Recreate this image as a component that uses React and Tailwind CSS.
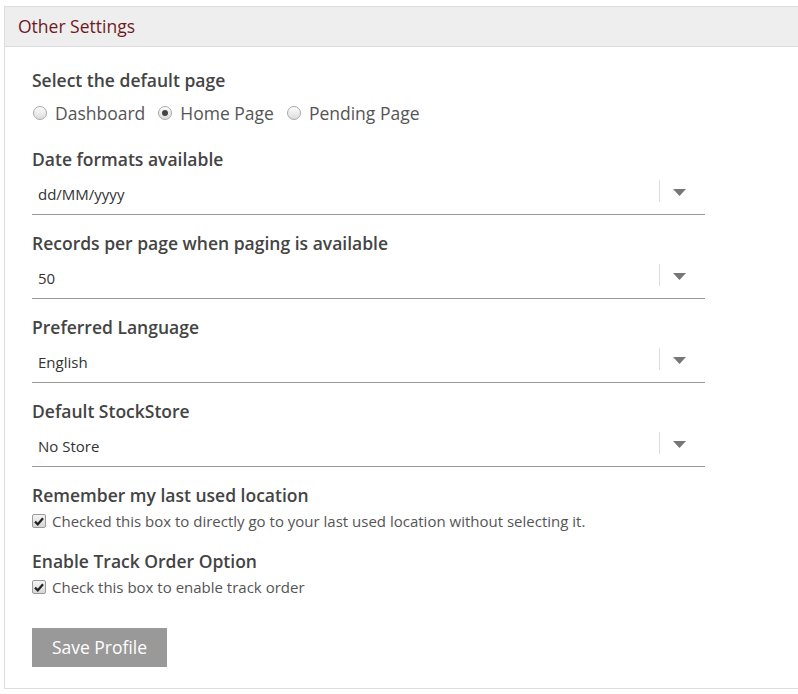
import React, { useState } from 'react';

const pageOptions = ['Dashboard', 'Home Page', 'Pending Page'];

const selects = [
  { label: 'Date formats available', value: 'dd/MM/yyyy' },
  { label: 'Records per page when paging is available', value: '50' },
  { label: 'Preferred Language', value: 'English' },
  { label: 'Default StockStore', value: 'No Store' },
];

const Radio = ({ checked }) => (
  <span className="w-[14px] h-[14px] rounded-full border border-[#a9a9a9] bg-gradient-to-b from-[#fdfdfd] to-[#dcdcdc] flex items-center justify-center shrink-0">
    {checked && <span className="w-[6px] h-[6px] rounded-full bg-[#444]" />}
  </span>
);

const Checkbox = () => (
  <span className="w-[14px] h-[14px] rounded-[2px] border border-[#9a9a9a] bg-gradient-to-b from-[#f4f4f4] to-[#d6d6d6] flex items-center justify-center shrink-0">
    <svg width="10" height="9" viewBox="0 0 10 9">
      <path d="M1 4.6 L3.8 7.3 L9 1.3" fill="none" stroke="#222" strokeWidth="2.2" />
    </svg>
  </span>
);

const SelectField = ({ label, value }) => (
  <div className="mb-[16px]">
    <div className="text-[17.5px] leading-[24px] font-semibold text-[#444]">{label}</div>
    <div className="mt-[5px] h-[39px] w-[673px] border-b border-[#9a9a9a] flex items-center">
      <span className="flex-1 pl-[6px] -mt-[1px] text-[15px] text-[#333]">{value}</span>
      <span className="w-px h-[22px] bg-[#ddd] -mt-[8px]" />
      <span className="w-[45px] flex justify-center -mt-[6px] pr-[6px]">
        <svg width="13" height="7" viewBox="0 0 13 7">
          <path d="M0 0 H13 L6.5 7 Z" fill="#777" />
        </svg>
      </span>
    </div>
  </div>
);

const App = () => {
  const [page, setPage] = useState('Home Page');

  return (
    <div className="min-h-screen bg-white pt-[6px] pl-[4px]" style={{ fontFamily: '"Open Sans", "Liberation Sans", sans-serif' }}>
      <div className="border border-r-0 border-[#ddd]">
        {/* Header */}
        <div className="h-[40px] bg-[#eee] border-b border-[#ddd] px-[13px] flex items-center">
          <span className="text-[17.5px] text-[#6d1a1f]">Other Settings</span>
        </div>

        {/* Body */}
        <div className="pl-[27px] pr-[28px] pt-[21px] pb-[21px]">
          <div className="text-[17.5px] leading-[24px] font-semibold text-[#444]">Select the default page</div>
          <div className="mt-[9px] mb-[22px] flex items-center h-[24px] text-[17.5px] text-[#555]">
            {pageOptions.map((opt) => (
              <label key={opt} className="flex items-center mr-[12px] cursor-pointer" onClick={() => setPage(opt)}>
                <span className="ml-[1px]"><Radio checked={page === opt} /></span>
                <span className="ml-[8px]">{opt}</span>
              </label>
            ))}
          </div>

          {selects.map((s) => (
            <SelectField key={s.label} label={s.label} value={s.value} />
          ))}

          <div className="text-[17.5px] leading-[24px] font-semibold text-[#444]">Remember my last used location</div>
          <div className="mt-[2px] flex items-center h-[24px] text-[15px] text-[#555]">
            <Checkbox />
            <span className="ml-[6px]">Checked this box to directly go to your last used location without selecting it.</span>
          </div>

          <div className="mt-[16px] text-[17.5px] leading-[24px] font-semibold text-[#444]">Enable Track Order Option</div>
          <div className="mt-[2px] flex items-center h-[24px] text-[15px] text-[#555]">
            <Checkbox />
            <span className="ml-[6px]">Check this box to enable track order</span>
          </div>

          <button className="mt-[29px] h-[39px] w-[135px] bg-[#999] text-white text-[17.5px]">
            Save Profile
          </button>
        </div>
      </div>
    </div>
  );
};

export default App;
